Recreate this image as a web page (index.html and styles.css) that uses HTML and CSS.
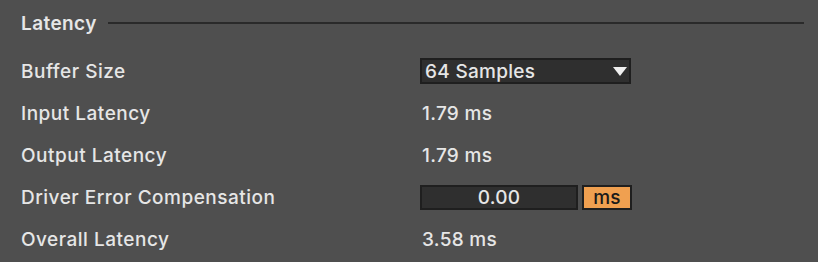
FILE: index.html
```html
<!DOCTYPE html>
<html lang="en">
<head>
    <meta charset="UTF-8">
    <title>Latency</title>
    <link rel="stylesheet" href="styles.css">
</head>
<body>
    <div class="section-head">
        <h2>Latency</h2>
        <div class="rule"></div>
    </div>

    <div class="row">
        <span class="label">Buffer Size</span>
        <div class="select">
            <span>64 Samples</span>
            <svg class="arrow" width="14" height="9" viewBox="0 0 14 9"><path d="M0 0 H14 L7 9 Z" fill="#f0f0f0"/></svg>
        </div>
    </div>
    <div class="row">
        <span class="label">Input Latency</span>
        <span class="value">1.79 ms</span>
    </div>
    <div class="row">
        <span class="label">Output Latency</span>
        <span class="value">1.79 ms</span>
    </div>
    <div class="row">
        <span class="label">Driver Error Compensation</span>
        <div class="comp">
            <div class="numbox">0.00</div>
            <div class="unit">ms</div>
        </div>
    </div>
    <div class="row">
        <span class="label">Overall Latency</span>
        <span class="value">3.58 ms</span>
    </div>
</body>
</html>
```

FILE: styles.css
```css
body {
    margin: 0;
    padding: 12px 14px 0 21px;
    background-color: #4f4f4f;
    font-family: Inter, "Noto Sans", sans-serif;
    font-weight: 500;
    font-size: 19px;
    letter-spacing: 0.5px;
    color: #e6e6e6;
}
.section-head {
    display: flex;
    align-items: center;
    gap: 11px;
    height: 22px;
    margin-bottom: 16px;
}
h2 {
    margin: 0;
    font-size: 19px;
    font-weight: 600;
    letter-spacing: 0.4px;
}
.rule {
    flex: 1;
    height: 2px;
    background-color: #2a2a2a;
}
.row {
    display: grid;
    grid-template-columns: 399px auto;
    align-items: center;
    height: 42px;
}
.select {
    width: 202px;
    height: 22px;
    border: 2px solid #1f1f1f;
    background-color: #2f2f2f;
    display: flex;
    align-items: center;
    justify-content: space-between;
    padding: 0 2px 0 3px;
    letter-spacing: 0.3px;
}
.value {
    padding-left: 2px;
    letter-spacing: 0.3px;
}
.comp {
    display: flex;
    gap: 4px;
    letter-spacing: 0.3px;
}
.numbox {
    width: 154px;
    height: 21px;
    border: 2px solid #1f1f1f;
    background-color: #2f2f2f;
    text-align: center;
    line-height: 21px;
}
.unit {
    width: 46px;
    height: 21px;
    border: 2px solid #1f1f1f;
    background-color: #f0a050;
    color: #1a1a1a;
    text-align: center;
    line-height: 21px;
}
```
